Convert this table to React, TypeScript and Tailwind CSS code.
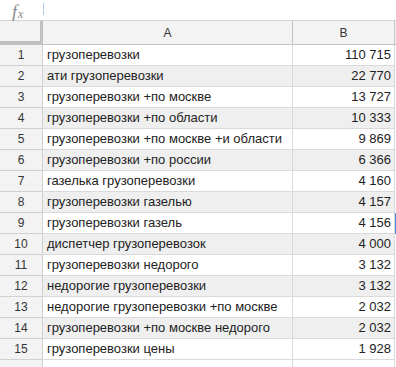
import type { ReactNode } from 'react';

const rows: [string, string][] = [
  ['грузоперевозки', '110 715'],
  ['ати грузоперевозки', '22 770'],
  ['грузоперевозки +по москве', '13 727'],
  ['грузоперевозки +по области', '10 333'],
  ['грузоперевозки +по москве +и области', '9 869'],
  ['грузоперевозки +по россии', '6 366'],
  ['газелька грузоперевозки', '4 160'],
  ['грузоперевозки газелью', '4 157'],
  ['грузоперевозки газель', '4 156'],
  ['диспетчер грузоперевозок', '4 000'],
  ['грузоперевозки недорого', '3 132'],
  ['недорогие грузоперевозки', '3 132'],
  ['недорогие грузоперевозки +по москве', '2 032'],
  ['грузоперевозки +по москве недорого', '2 032'],
  ['грузоперевозки цены', '1 928'],
];

function HeaderCell({ children, className = '' }: { children?: ReactNode; className?: string }) {
  return (
    <div
      className={`flex h-[24px] items-center justify-center border-b border-r border-[#c4c4c4] bg-[#f3f3f3] text-[12px] text-[#333] ${className}`}
    >
      {children}
    </div>
  );
}

export default function App() {
  return (
    <div className="h-[367px] w-[396px] overflow-hidden bg-white font-['Liberation_Sans',Arial,sans-serif] text-[#222]">
      {/* formula bar */}
      <div className="flex h-[21px] items-start border-b border-[#d4d4d4]">
        <span className="ml-[12px] mt-[3px] w-[31px] font-['Liberation_Serif',serif] text-[18px] italic leading-none text-[#8a8a8a]">
          f<span className="ml-[1px] text-[12px]">x</span>
        </span>
        <span className="mt-[3px] h-[12px] w-px bg-[#b5cdf5]" />
      </div>

      <div className="grid grid-cols-[43px_250px_102px_1px]">
        <div className="h-[24px] border-b-[4px] border-r-[3px] border-[#c0c0c0] bg-[#f3f3f3]" />
        <HeaderCell>A</HeaderCell>
        <HeaderCell>B</HeaderCell>
        <div className="h-[24px] border-b border-[#c4c4c4] bg-[#f3f3f3]" />

        {rows.map(([label, value], i) => {
          const bg = i % 2 === 1 ? 'bg-[#efefef]' : 'bg-white';
          return (
            <div key={i} className="contents">
              <div className="flex h-[21px] items-center justify-center border-b border-r border-[#d0d0d0] bg-[#f3f3f3] text-[12px] text-[#333]">
                {i + 1}
              </div>
              <div className={`flex h-[21px] items-center truncate border-b border-r border-[#dadada] pl-[4px] text-[13px] ${bg}`}>
                {label}
              </div>
              <div className={`flex h-[21px] items-center justify-end border-b border-r border-[#dadada] pr-[3px] text-[13px] ${bg}`}>
                {value}
              </div>
              <div className={`h-[21px] ${i === 8 ? 'bg-[#4a89dc]' : 'bg-white'}`} />
            </div>
          );
        })}

        <div className="h-[10px] border-r border-[#d0d0d0] bg-[#f3f3f3]" />
        <div className="h-[10px] border-r border-[#dadada]" />
        <div className="h-[10px] border-r border-[#dadada]" />
        <div />
      </div>
    </div>
  );
}
